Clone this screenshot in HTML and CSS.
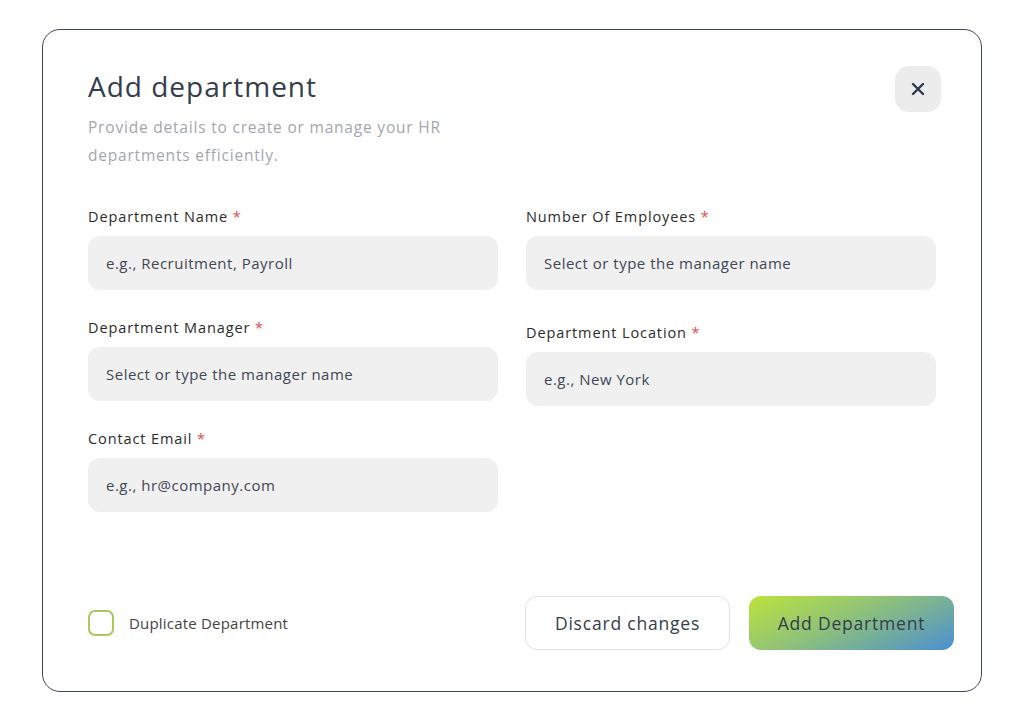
FILE: index.html
```html
<!DOCTYPE html>
<html lang="en">
<head>
  <meta charset="UTF-8">
  <meta name="viewport" content="width=device-width, initial-scale=1.0">
  <title>Add department</title>
  <link rel="stylesheet" href="styles.css">
</head>
<body>
  <div class="modal">
    <header class="modal-header">
      <div>
        <h1>Add department</h1>
        <p class="subtitle">Provide details to create or manage your HR departments efficiently.</p>
      </div>
      <button type="button" class="close-button" aria-label="Close">
        <svg width="14" height="14" viewBox="0 0 14 14"><path d="M2 2L12 12M12 2L2 12" stroke="#2f3a4a" stroke-width="2.4" stroke-linecap="round"/></svg>
      </button>
    </header>

    <div class="form-grid">
      <div class="form-col">
        <div class="form-group">
          <label for="deptName">Department Name <span class="req">*</span></label>
          <input type="text" id="deptName" placeholder="e.g., Recruitment, Payroll">
        </div>
        <div class="form-group">
          <label for="deptManager">Department Manager <span class="req">*</span></label>
          <input type="text" id="deptManager" placeholder="Select or type the manager name">
        </div>
        <div class="form-group">
          <label for="email">Contact Email <span class="req">*</span></label>
          <input type="email" id="email" placeholder="e.g., hr@company.com">
        </div>
      </div>
      <div class="form-col form-col-right">
        <div class="form-group">
          <label for="employees">Number Of Employees <span class="req">*</span></label>
          <input type="text" id="employees" placeholder="Select or type the manager name">
        </div>
        <div class="form-group">
          <label for="location">Department Location <span class="req">*</span></label>
          <input type="text" id="location" placeholder="e.g., New York">
        </div>
      </div>
    </div>

    <footer class="modal-footer">
      <label class="checkbox">
        <span class="checkbox-box"></span>
        Duplicate Department
      </label>
      <div class="actions">
        <button type="button" class="btn-secondary">Discard changes</button>
        <button type="button" class="btn-primary">Add Department</button>
      </div>
    </footer>
  </div>
</body>
</html>
```

FILE: styles.css
```css
:root {
  --color-text: #333d4c;
  --color-label: #2b2b2b;
  --color-muted: #a3a7ae;
  --color-field: #f0f0f0;
  --color-border: #3d4856;
  --color-required: #e5484d;
  --color-check: #a9c95e;
}

* {
  margin: 0;
  padding: 0;
  box-sizing: border-box;
}

body {
  font-family: 'Open Sans', 'Liberation Sans', sans-serif;
  background: #fff;
  padding: 29px 42px;
}

.modal {
  width: 940px;
  height: 663px;
  border: 1.5px solid var(--color-border);
  border-radius: 18px;
  padding: 39px 45px 41px 45px;
  display: flex;
  flex-direction: column;
}

.modal-header {
  display: flex;
  justify-content: space-between;
  align-items: flex-start;
}

h1 {
  font-size: 28px;
  font-weight: 400;
  line-height: 34px;
  letter-spacing: 1px;
  color: var(--color-text);
}

.subtitle {
  margin-top: 10px;
  width: 380px;
  font-size: 15.5px;
  line-height: 28px;
  letter-spacing: 0.8px;
  color: var(--color-muted);
}

.close-button {
  width: 46px;
  height: 46px;
  margin-top: -3px;
  margin-right: -5px;
  border: none;
  border-radius: 14px;
  background: #ececec;
  display: flex;
  align-items: center;
  justify-content: center;
  cursor: pointer;
}

.form-grid {
  margin-top: 39px;
  display: grid;
  grid-template-columns: 410px 410px;
  gap: 28px;
}

.form-col {
  display: flex;
  flex-direction: column;
  gap: 29px;
}

.form-col-right {
  gap: 34px;
}

.form-group {
  display: flex;
  flex-direction: column;
  gap: 10px;
}

label {
  font-size: 14.5px;
  line-height: 18px;
  letter-spacing: 0.9px;
  color: var(--color-label);
}

.req {
  color: var(--color-required);
}

input {
  height: 54px;
  border: none;
  border-radius: 12px;
  background: var(--color-field);
  padding: 0 18px;
  font-family: inherit;
  font-size: 15px;
  letter-spacing: 0.5px;
  color: var(--color-text);
}

input::placeholder {
  color: #3f4756;
}

.modal-footer {
  margin-top: auto;
  margin-right: -18px;
  display: flex;
  align-items: center;
  justify-content: space-between;
}

.checkbox {
  display: flex;
  align-items: center;
  gap: 15px;
  font-size: 15px;
  letter-spacing: 0.2px;
  color: #444;
}

.checkbox-box {
  width: 26px;
  height: 26px;
  border: 2px solid var(--color-check);
  border-radius: 7px;
}

.actions {
  display: flex;
  gap: 19px;
}

.actions button {
  width: 205px;
  height: 54px;
  border-radius: 12px;
  font-family: inherit;
  font-size: 17.5px;
  letter-spacing: 0.8px;
  color: var(--color-text);
  cursor: pointer;
}

.btn-secondary {
  background: #fff;
  border: 1.5px solid #e2e2e2;
}

.btn-primary {
  border: none;
  background: linear-gradient(155deg, #bde33a 0%, #8fc279 45%, #6aa6a8 75%, #4a8fd4 100%);
}
```
